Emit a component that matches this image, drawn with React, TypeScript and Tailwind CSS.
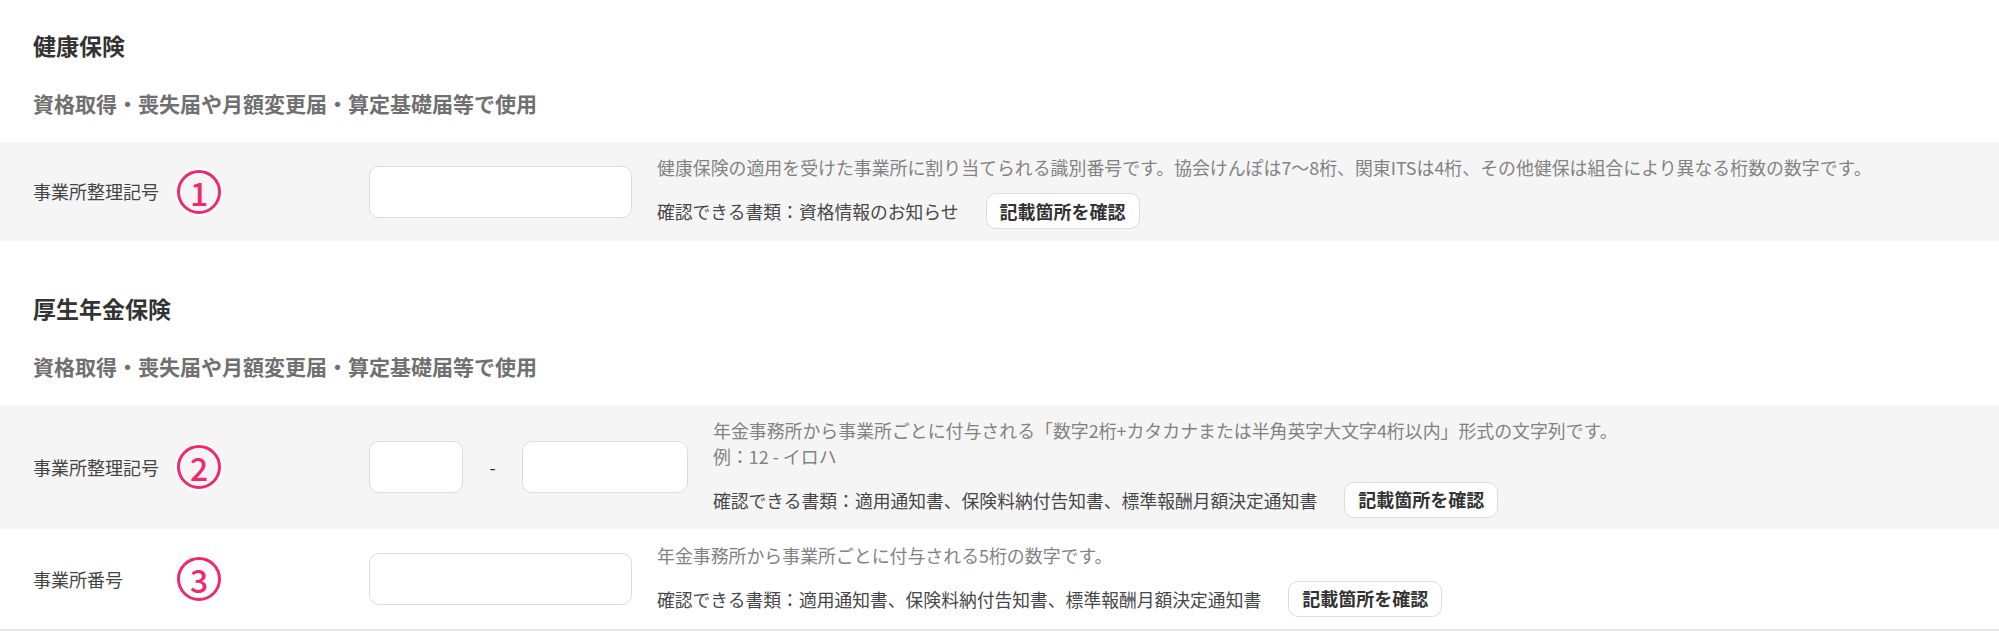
import React from "react";

type RowProps = {
  label: string;
  num: string;
  fields: React.ReactNode;
  lines: string[];
  docs: string;
  className?: string;
};

const Badge: React.FC<{ num: string }> = ({ num }) => (
  <div className="flex h-[44px] w-[44px] items-center justify-center rounded-full border-[3.5px] border-[#f0296d] text-[32px] font-medium leading-none text-[#f0296d] shadow-[0_0_0_2px_#ffffff,inset_0_0_0_1px_#ffffff]">
    {num}
  </div>
);

const Field: React.FC<{ width: string }> = ({ width }) => (
  <input
    type="text"
    className={`${width} h-[52px] rounded-[10px] border-[1.5px] border-[#dcdcdc] bg-white px-3 text-[18px] outline-none`}
  />
);

const Row: React.FC<RowProps> = ({ label, num, fields, lines, docs, className }) => (
  <div className={`flex items-center ${className ?? ""}`}>
    <div className="flex w-[369px] shrink-0 items-center pl-[33px]">
      <span className="w-[144px] text-[18px] text-[#444]">{label}</span>
      <Badge num={num} />
    </div>
    <div className="flex shrink-0 items-center">{fields}</div>
    <div className="ml-[25px] flex flex-col">
      {lines.map((l, i) => (
        <p key={i} className="text-[17.9px] leading-[26px] text-[#828282]">
          {l}
        </p>
      ))}
      <div className="mt-[13px] flex items-center gap-[27px]">
        <span className="text-[17.8px] leading-[26px] text-[#474747]">{docs}</span>
        <button className="h-[36px] rounded-[10px] border-[1.5px] border-[#dcdcdc] bg-white px-[13px] text-[18px] font-bold text-[#333]">
          記載箇所を確認
        </button>
      </div>
    </div>
  </div>
);

const SectionHead: React.FC<{ title: string; top: string }> = ({ title, top }) => (
  <div className={`${top} mb-[24px] pl-[33px]`}>
    <h2 className="text-[23px] font-bold leading-[30px] text-[#333]">{title}</h2>
    <p className="mt-[28px] text-[21px] font-bold leading-[30px] text-[#707070]">
      資格取得・喪失届や月額変更届・算定基礎届等で使用
    </p>
  </div>
);

export default function App() {
  return (
    <div className="min-h-[643px] w-full bg-white font-['Noto_Sans_CJK_JP','Noto_Sans',sans-serif]">
      <SectionHead title="健康保険" top="pt-[30px]" />
      <Row
        className="h-[99px] bg-[#f6f5f6]"
        label="事業所整理記号"
        num="1"
        fields={<Field width="w-[263px]" />}
        lines={[
          "健康保険の適用を受けた事業所に割り当てられる識別番号です。協会けんぽは7〜8桁、関東ITSは4桁、その他健保は組合により異なる桁数の数字です。",
        ]}
        docs="確認できる書類：資格情報のお知らせ"
      />

      <SectionHead title="厚生年金保険" top="mt-[52px]" />
      <Row
        className="h-[124px] bg-[#f6f5f6]"
        label="事業所整理記号"
        num="2"
        fields={
          <>
            <Field width="w-[94px]" />
            <span className="w-[59px] text-center text-[18px] text-[#333]">-</span>
            <Field width="w-[166px]" />
          </>
        }
        lines={[
          "年金事務所から事業所ごとに付与される「数字2桁+カタカナまたは半角英字大文字4桁以内」形式の文字列です。",
          "例：12 - イロハ",
        ]}
        docs="確認できる書類：適用通知書、保険料納付告知書、標準報酬月額決定通知書"
      />
      <Row
        className="h-[102px] border-b-2 border-[#e6e6e6] bg-white"
        label="事業所番号"
        num="3"
        fields={<Field width="w-[263px]" />}
        lines={["年金事務所から事業所ごとに付与される5桁の数字です。"]}
        docs="確認できる書類：適用通知書、保険料納付告知書、標準報酬月額決定通知書"
      />
    </div>
  );
}
